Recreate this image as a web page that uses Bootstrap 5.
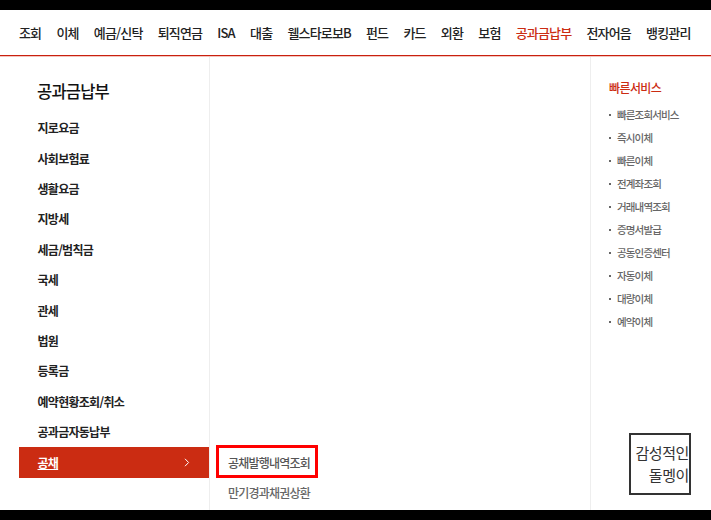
<!DOCTYPE html>
<html lang="ko"><head><meta charset="utf-8"><title>공과금납부</title>
<link href="https://cdn.jsdelivr.net/npm/bootstrap@5.3.0/dist/css/bootstrap.min.css" rel="stylesheet">
<style>
html,body{height:520px;overflow:hidden;background:#fff}
body{font-family:"Noto Sans CJK KR","Liberation Sans",sans-serif;color:#222;letter-spacing:-.6px}
.capbar{height:10px;background:#000}
.stage{height:500px;display:flex;flex-direction:column}
.topnav{height:46px;padding-left:19px;gap:15.2px;border-bottom:1px solid #c9200f;box-shadow:0 1px 0 #f3c4bd;font-size:13px;font-weight:500;letter-spacing:-.85px}
.topnav a{color:#222;text-decoration:none}
.topnav a.on{color:#cb2c12}
.panes{flex:1;min-height:0;margin-top:1px}
.leftpane{width:210px;border-right:1px solid #eee;padding-top:21px}
.leftpane h2{font-size:16.5px;font-weight:500;margin:0 0 9px 37px;line-height:26px;letter-spacing:-.8px;color:#111}
.leftlink{display:flex;align-items:center;justify-content:space-between;height:30.4px;margin-left:19px;padding:0 18px 0 18.5px;font-size:12px;font-weight:700;color:#222;text-decoration:none;letter-spacing:-.72px}
.leftlink.on{background:#cb2c12;color:#fff;height:30.5px;padding-right:19px}
.midpane{flex:1;padding-top:388px;padding-left:6px}
.sublink{display:block;height:31px;line-height:30px;width:102px;padding-left:12px;font-size:12px;font-weight:500;color:#666;text-decoration:none;white-space:nowrap;letter-spacing:-.8px}
.sublink.mark1{height:33px;border:3px solid #f00;padding:1px 0 0 9px;line-height:27px;color:#555}
.rightpane{width:121px;border-left:1px solid #eee;padding:22px 0 0 18px;position:relative}
.rightpane h3{font-size:12px;font-weight:500;color:#cb2c12;margin:0 0 6px;line-height:18px}
.quick{list-style:none;margin:0;padding:0}
.quick li{height:23px;line-height:23px;font-size:10.5px;font-weight:500;color:#666;padding-left:8px;position:relative;white-space:nowrap;letter-spacing:-.85px}
.quick li::before{content:"";position:absolute;left:0;top:11px;width:2px;height:2px;background:#666}
.stampbox{position:absolute;left:38px;top:376px;width:62px;height:62px;border:2px solid #333;text-align:right;font-size:15px;font-weight:400;line-height:22px;color:#333;padding-top:7px;letter-spacing:-.4px;white-space:nowrap}
</style></head><body>
<div class="capbar"></div>
<div class="stage">
<nav class="topnav d-flex align-items-center">
<a href="#">조회</a><a href="#">이체</a><a href="#">예금/신탁</a><a href="#">퇴직연금</a><a href="#">ISA</a><a href="#">대출</a><a href="#">웰스타로보B</a><a href="#">펀드</a><a href="#">카드</a><a href="#">외환</a><a href="#">보험</a><a href="#" class="on">공과금납부</a><a href="#">전자어음</a><a href="#">뱅킹관리</a>
</nav>
<div class="panes d-flex">
<div class="leftpane">
<h2>공과금납부</h2>
<a class="leftlink" href="#">지로요금</a>
<a class="leftlink" href="#">사회보험료</a>
<a class="leftlink" href="#">생활요금</a>
<a class="leftlink" href="#">지방세</a>
<a class="leftlink" href="#">세금/범칙금</a>
<a class="leftlink" href="#">국세</a>
<a class="leftlink" href="#">관세</a>
<a class="leftlink" href="#">법원</a>
<a class="leftlink" href="#">등록금</a>
<a class="leftlink" href="#">예약현황조회/취소</a>
<a class="leftlink" href="#">공과금자동납부</a>
<a class="leftlink on" href="#"><span class="text-decoration-underline">공채</span><svg width="6" height="9" viewBox="0 0 6 9"><path d="M1 .8 4.6 4.5 1 8.2" fill="none" stroke="#fff" stroke-width="1"/></svg></a>
</div>
<div class="midpane">
<a class="sublink mark1" href="#">공채발행내역조회</a>
<a class="sublink" href="#">만기경과채권상환</a>
</div>
<div class="rightpane">
<h3>빠른서비스</h3>
<ul class="quick">
<li>빠른조회서비스</li><li>즉시이체</li><li>빠른이체</li><li>전계좌조회</li><li>거래내역조회</li><li>증명서발급</li><li>공동인증센터</li><li>자동이체</li><li>대량이체</li><li>예약이체</li>
</ul>
<div class="stampbox">감성적인<br>돌멩이</div>
</div>
</div>
</div>
<div class="capbar"></div>
<script src="https://cdn.jsdelivr.net/npm/bootstrap@5.3.0/dist/js/bootstrap.bundle.min.js"></script>
</body></html>
